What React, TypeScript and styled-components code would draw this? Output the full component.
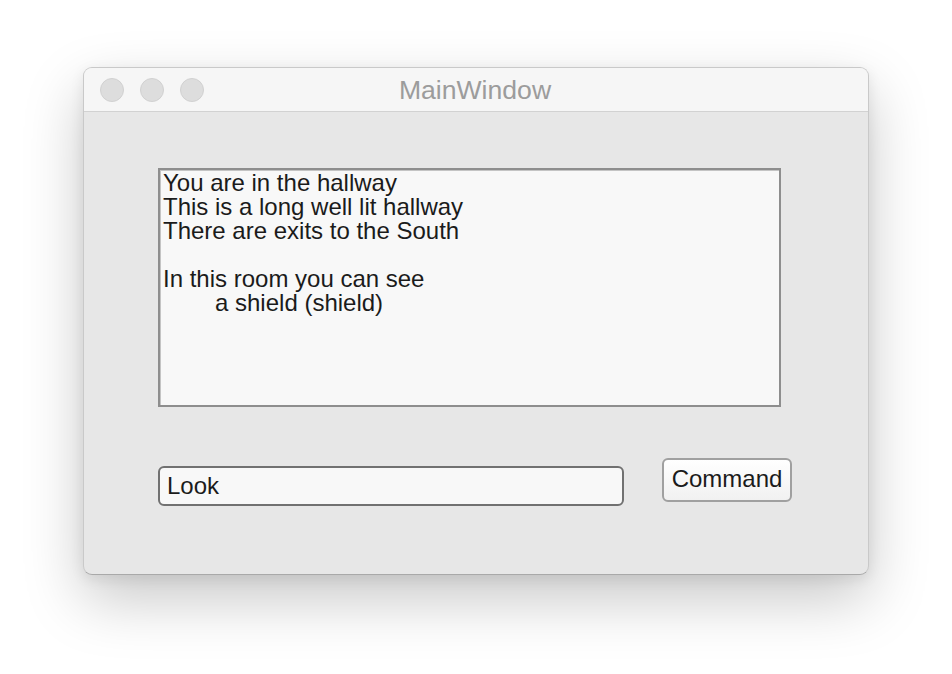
import React from "react";
import styled, { createGlobalStyle } from "styled-components";

const GlobalStyle = createGlobalStyle`
  html, body {
    margin: 0;
    padding: 0;
    background: #ffffff;
  }
  body {
    font-family: "Liberation Sans", Arial, sans-serif;
  }
`;

const Page = styled.div`
  width: 952px;
  height: 674px;
  box-sizing: border-box;
  padding: 67px 0 0 83px;
  background: #ffffff;
`;

const Window = styled.div`
  width: 786px;
  height: 508px;
  box-sizing: border-box;
  border-radius: 9px;
  background: #e7e7e7;
  border: 1px solid #c9c9c9;
  border-bottom-color: #a9a9a9;
  box-shadow: 0 24px 60px rgba(0, 0, 0, 0.22), 0 4px 14px rgba(0, 0, 0, 0.08);
  display: flex;
  flex-direction: column;
  overflow: hidden;
`;

const TitleBar = styled.div`
  position: relative;
  height: 43px;
  flex-shrink: 0;
  background: #f6f6f6;
  border-bottom: 1px solid #d2d2d2;
  display: flex;
  align-items: center;
  justify-content: center;
`;

const Lights = styled.div`
  position: absolute;
  left: 16px;
  top: 10px;
  display: flex;
  gap: 16px;
`;

const Light = styled.span`
  width: 22px;
  height: 22px;
  border-radius: 50%;
  background: #dddddd;
  border: 1px solid #d1d1d1;
`;

const Title = styled.div`
  font-family: "Liberation Sans", Arial, sans-serif;
  font-size: 26.6px;
  color: #9c9c9c;
  margin-top: 2px;
  margin-left: -2px;
`;

const Body = styled.div`
  flex: 1;
  display: flex;
  flex-direction: column;
  padding: 56px 0 0 74px;
`;

const Output = styled.div`
  width: 623px;
  height: 239px;
  box-sizing: border-box;
  background: #f8f8f8;
  border: 2px solid #8e8e8e;
  box-shadow: inset 1px 1px 0 #c4c4c4;
  padding: 1px 0 0 3px;
  font-size: 24px;
  line-height: 24px;
  color: #1b1b1b;
`;

const Line = styled.div<{ $indent?: boolean }>`
  min-height: 24px;
  padding-left: ${({ $indent }) => ($indent ? "52px" : "0")};
  white-space: pre;
`;

const CommandRow = styled.div`
  display: flex;
  align-items: flex-start;
  gap: 38px;
  margin-top: 51px;
`;

const Input = styled.input`
  width: 466px;
  height: 40px;
  box-sizing: border-box;
  margin: 8px 0 0 0;
  padding: 0 7px;
  border: 2px solid #717171;
  border-radius: 6px;
  background: #f8f8f8;
  font-family: "Liberation Sans", Arial, sans-serif;
  font-size: 24px;
  color: #1b1b1b;
  outline: none;
`;

const Button = styled.button`
  width: 130px;
  height: 44px;
  box-sizing: border-box;
  padding: 0 0 3px 0;
  border: 2px solid #a0a0a0;
  border-radius: 6px;
  background: linear-gradient(#ffffff, #f1f1f1);
  font-family: "Liberation Sans", Arial, sans-serif;
  font-size: 24px;
  color: #1b1b1b;
  cursor: pointer;
`;

const lines: { text: string; indent?: boolean }[] = [
  { text: "You are in the hallway" },
  { text: "This is a long well lit hallway" },
  { text: "There are exits to the South" },
  { text: "" },
  { text: "In this room you can see" },
  { text: "a shield (shield)", indent: true },
];

export default function App() {
  return (
    <>
      <GlobalStyle />
      <Page>
        <Window>
          <TitleBar>
            <Lights>
              <Light />
              <Light />
              <Light />
            </Lights>
            <Title>MainWindow</Title>
          </TitleBar>
          <Body>
            <Output>
              {lines.map((l, i) => (
                <Line key={i} $indent={l.indent}>
                  {l.text}
                </Line>
              ))}
            </Output>
            <CommandRow>
              <Input defaultValue="Look" />
              <Button>Command</Button>
            </CommandRow>
          </Body>
        </Window>
      </Page>
    </>
  );
}
